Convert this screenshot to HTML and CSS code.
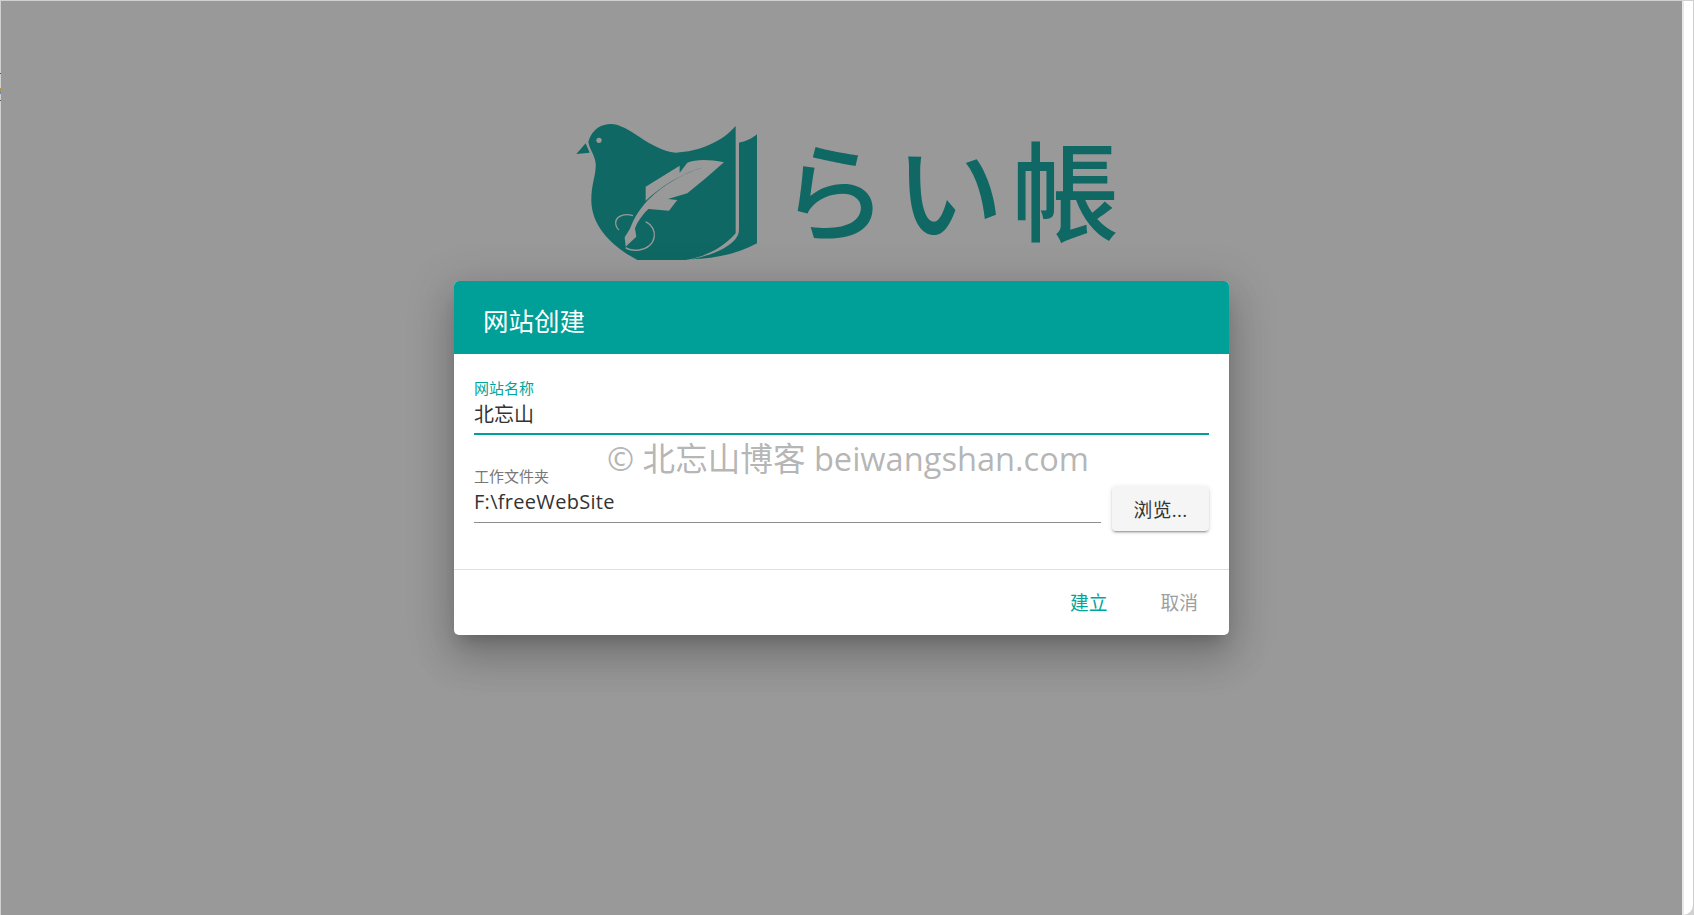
FILE: index.html
```html
<!DOCTYPE html>
<html lang="zh-CN">
<head>
    <meta charset="UTF-8" />
    <title>网站创建</title>
    <link rel="stylesheet" href="styles.css">
</head>
<body>
    <div class="window">
        <main class="overlay">
            <div class="brand">
                <svg class="brand-mark" viewBox="0 0 195 145" aria-hidden="true">
                    <g transform="translate(-10 -20) scale(0.3333)">
                        <path class="ink" d="M52 162 L80 130 L92 158 Z" />
                        <path class="ink" d="M88 125 C100 85 130 72 155 72 C210 72 270 150 350 158 C420 155 490 125 530 78 L530 400 C490 445 440 470 380 480 L235 480 C160 440 97 380 97 300 C97 250 112 225 110 190 C108 165 92 150 88 125 Z" />
                        <path class="ink" d="M540 128 C560 125 580 115 594 103 L594 430 C540 460 470 476 395 478 C470 465 540 430 540 390 Z" />
                        <circle class="cut" cx="120" cy="121" r="8" />
                        <path class="cut" d="M495 187 C450 178 410 178 385 188 L362 218 L362 197 L260 260 L260 303 C300 265 370 215 450 198 C370 215 290 270 250 320 C225 350 218 375 212 388 L197 412 L200 440 L232 410 L228 385 C235 365 250 345 268 327 L330 332 L355 300 L327 297 L385 280 L440 235 Z" />
                        <path class="ring" d="M222 347 C190 338 165 352 171 376 C173 384 177 388 180 390" />
                        <path class="ring" d="M260 365 C300 385 295 440 240 450 C222 452 208 449 200 443" />
                    </g>
                </svg>
                <span class="brand-name">らい帳</span>
            </div>

            <section class="dialog">
                <header class="dialog-head">网站创建</header>
                <div class="dialog-body">
                    <div class="field field-active">
                        <label>网站名称</label>
                        <div class="field-value">北忘山</div>
                    </div>
                    <div class="field-row">
                        <div class="field">
                            <label>工作文件夹</label>
                            <div class="field-value">F:\freeWebSite</div>
                        </div>
                        <button class="browse-btn">浏览...</button>
                    </div>
                </div>
                <footer class="dialog-foot">
                    <button class="text-btn text-btn-primary">建立</button>
                    <button class="text-btn">取消</button>
                </footer>
                <div class="watermark">© 北忘山博客 beiwangshan.com</div>
            </section>
        </main>
        <div class="scrollbar"></div>
    </div>
</body>
</html>
```

FILE: styles.css
```css
* {
    box-sizing: border-box;
    margin: 0;
    padding: 0;
    font-family: "Open Sans", "Noto Sans CJK SC", sans-serif;
}

body {
    background-color: #d0d0d0;
    background-image: linear-gradient(#d0d0d0 73px, #555 73px, #555 74px, #d0d0d0 74px, #d0d0d0 88px, #b9924f 88px, #b9924f 91px, #5a93ad 91px, #5a93ad 94px, #d0d0d0 94px, #d0d0d0 100px, #555 100px, #555 101px, #d0d0d0 101px);
    background-size: 1px 100%;
    background-repeat: no-repeat;
    height: 915px;
    overflow: hidden;
}

.window {
    display: flex;
    height: 915px;
    padding: 1px 1px 0 1px;
}

.overlay {
    flex: 1;
    background: #999;
    padding-top: 121px;
    display: flex;
    flex-direction: column;
    align-items: center;
}

.scrollbar {
    width: 11px;
    background: #fff;
    border-left: 2px solid #e8e8e8;
    border-bottom-right-radius: 10px;
}

.brand {
    display: flex;
    align-items: center;
    height: 139px;
    margin-left: 24px;
    margin-bottom: 20px;
}

.brand-mark {
    width: 195px;
    height: 145px;
    margin-left: -10px;
    margin-right: 15px;
    margin-top: 1px;
}

.ink {
    fill: #0f6863;
}

.cut {
    fill: #999;
}

.ring {
    fill: none;
    stroke: #999;
    stroke-width: 4;
}

.brand-name {
    font-family: "Noto Sans CJK JP", sans-serif;
    font-size: 108px;
    font-weight: 500;
    line-height: 139px;
    color: #0f6863;
    letter-spacing: 8px;
    white-space: nowrap;
    margin-top: -11px;
}

.dialog {
    position: relative;
    width: 775px;
    height: 354px;
    background: #fff;
    border-radius: 5px;
    box-shadow: 0 11px 15px -7px rgba(0,0,0,0.2), 0 24px 38px 3px rgba(0,0,0,0.14), 0 9px 46px 8px rgba(0,0,0,0.12);
    overflow: hidden;
    display: flex;
    flex-direction: column;
}

.dialog-head {
    height: 73px;
    padding: 22px 29px 0;
    background: #009f97;
    color: #fff;
    font-size: 25.5px;
    line-height: 36px;
}

.dialog-body {
    flex: 1;
    padding: 24px 20px 0;
}

.field {
    flex: 1;
}

.field label {
    display: block;
    font-size: 15px;
    line-height: 20px;
    color: #777;
}

.field-value {
    height: 37px;
    font-size: 20px;
    line-height: 32px;
    letter-spacing: 0.3px;
    color: #333;
    border-bottom: 1px solid #8d8d8d;
}

.field-active {
    margin-bottom: 31px;
}

.field-active label {
    color: #00a59c;
}

.field-active .field-value {
    height: 37px;
    line-height: 34px;
    letter-spacing: 0;
    border-bottom: 2px solid #009f97;
}

.field-row {
    display: flex;
    align-items: flex-start;
    gap: 11px;
}

.browse-btn {
    width: 97px;
    height: 45px;
    margin-top: 20px;
    border: none;
    border-radius: 4px;
    background: #f5f5f5;
    color: #333;
    font-size: 18.75px;
    letter-spacing: 0.3px;
    box-shadow: 0 3px 1px -2px rgba(0,0,0,0.2), 0 2px 2px 0 rgba(0,0,0,0.14), 0 1px 5px 0 rgba(0,0,0,0.12);
}

.dialog-foot {
    height: 66px;
    border-top: 1px solid #e0e0e0;
    display: flex;
    justify-content: flex-end;
    align-items: center;
    gap: 53px;
    padding-right: 31px;
    padding-bottom: 2px;
}

.text-btn {
    border: none;
    background: none;
    color: #9e9e9e;
    font-size: 18.75px;
}

.text-btn-primary {
    color: #00a59c;
}

.watermark {
    position: absolute;
    top: 155px;
    left: 153px;
    font-size: 32.6px;
    line-height: 46px;
    color: rgba(110, 110, 110, 0.52);
    white-space: nowrap;
    pointer-events: none;
}
```
